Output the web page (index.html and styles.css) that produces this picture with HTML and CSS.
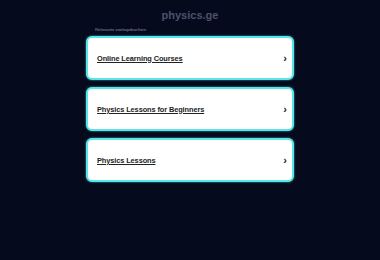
FILE: index.html
```html
<!DOCTYPE html>
<html>
<head>
<meta charset="utf-8">
<link rel="stylesheet" href="styles.css">
</head>
<body>
<div class="page">
  <h1 class="domain">physics.ge</h1>
  <div class="related">
    <div class="label">Relevante zoekopdrachten</div>
    <a class="card" href="#"><span class="text">Online Learning Courses</span><span class="chev">&#x203A;</span></a>
    <a class="card" href="#"><span class="text">Physics Lessons for Beginners</span><span class="chev">&#x203A;</span></a>
    <a class="card" href="#"><span class="text">Physics Lessons</span><span class="chev">&#x203A;</span></a>
  </div>
</div>
</body>
</html>
```
FILE: styles.css
```css
html, body {
  margin: 0;
  padding: 0;
  background: #060a1d;
  width: 380px;
  height: 260px;
  overflow: hidden;
  font-family: "Liberation Sans", Arial, sans-serif;
}
.page {
  display: flex;
  flex-direction: column;
  align-items: center;
  padding-top: 8px;
}
.domain {
  margin: 0;
  font-size: 11px;
  line-height: 14px;
  font-weight: bold;
  color: #4b526c;
}
.related {
  width: 208px;
  display: flex;
  flex-direction: column;
  gap: 7px;
  margin-top: 4px;
}
.label {
  font-size: 4.3px;
  line-height: 6px;
  color: #8a90a6;
  padding-left: 9px;
  margin-bottom: -4px;
  margin-top: 1px;
}
.card {
  box-sizing: border-box;
  height: 44px;
  border: 2px solid #58e6e8;
  border-radius: 6px;
  background: #fff;
  box-shadow: 0 0 2px #3cc8cc;
  display: flex;
  align-items: center;
  justify-content: space-between;
  padding: 0 5px 0 9px;
  text-decoration: none;
}
.text {
  font-size: 7.4px;
  font-weight: bold;
  color: #222;
  letter-spacing: -0.1px;
  text-decoration: underline;
}
.chev {
  font-size: 11px;
  font-weight: bold;
  color: #222;
  line-height: 11px;
}
```
